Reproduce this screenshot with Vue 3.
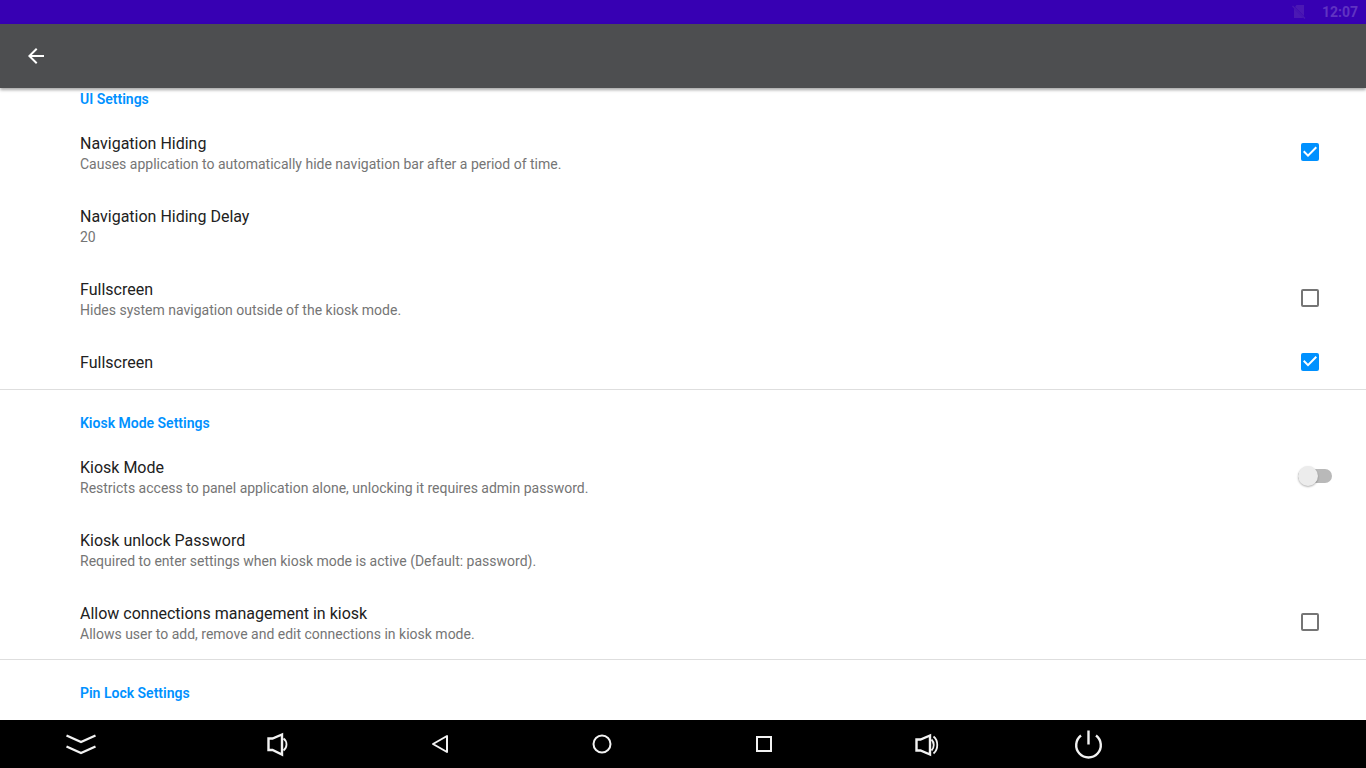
<script setup>
import { ref } from 'vue';

const sections = ref([
  {
    title: 'UI Settings',
    items: [
      {
        id: 'nav-hiding',
        title: 'Navigation Hiding',
        summary: 'Causes application to automatically hide navigation bar after a period of time.',
        type: 'checkbox',
        value: true,
      },
      { id: 'nav-delay', title: 'Navigation Hiding Delay', summary: '20', type: 'text' },
      {
        id: 'fullscreen-system',
        title: 'Fullscreen',
        summary: 'Hides system navigation outside of the kiosk mode.',
        type: 'checkbox',
        value: false,
      },
      { id: 'fullscreen', title: 'Fullscreen', type: 'checkbox', value: true },
    ],
  },
  {
    title: 'Kiosk Mode Settings',
    items: [
      {
        id: 'kiosk-mode',
        title: 'Kiosk Mode',
        summary: 'Restricts access to panel application alone, unlocking it requires admin password.',
        type: 'switch',
        value: false,
      },
      {
        id: 'kiosk-password',
        title: 'Kiosk unlock Password',
        summary: 'Required to enter settings when kiosk mode is active (Default: password).',
        type: 'text',
      },
      {
        id: 'kiosk-connections',
        title: 'Allow connections management in kiosk',
        summary: 'Allows user to add, remove and edit connections in kiosk mode.',
        type: 'checkbox',
        value: false,
      },
    ],
  },
  { title: 'Pin Lock Settings', items: [] },
]);
</script>

<template>
  <div class="screen">
    <div class="status-bar">
      <svg class="no-sim" width="14" height="16" viewBox="0 0 14 16">
        <path d="M4.500 1H12v11L3 3zM2 4.500l9.500 9.500H2z" fill="currentColor" />
        <path d="M0.500 2l12.500 12.500" stroke="currentColor" stroke-width="1.200" />
      </svg>
      <span>12:07</span>
    </div>

    <header class="app-bar">
      <button type="button" class="back-button" aria-label="Back">
        <svg width="24" height="24" viewBox="0 0 24 24">
          <path d="M20 11H7.830l5.590-5.590L12 4l-8 8 8 8 1.410-1.410L7.830 13H20v-2z" fill="#fff" />
        </svg>
      </button>
    </header>

    <main class="settings">
      <section v-for="section in sections" :key="section.title" class="section">
        <h2 class="category">{{ section.title }}</h2>
        <template v-for="item in section.items" :key="item.id">
          <button v-if="item.type === 'text'" type="button" class="row">
            <span class="texts">
              <span class="title">{{ item.title }}</span>
              <span class="summary">{{ item.summary }}</span>
            </span>
          </button>
          <label v-else class="row" :for="item.id">
            <span class="texts">
              <span class="title">{{ item.title }}</span>
              <span v-if="item.summary" class="summary">{{ item.summary }}</span>
            </span>
            <span class="widget">
              <input
                v-if="item.type === 'switch'"
                v-model="item.value"
                :id="item.id"
                type="checkbox"
                role="switch"
                class="switch"
              />
              <input v-else v-model="item.value" :id="item.id" type="checkbox" class="checkbox" />
            </span>
          </label>
        </template>
      </section>
    </main>

    <nav class="nav-bar">
      <div class="nav-side">
        <button type="button" class="nav-button" aria-label="Hide navigation">
          <svg width="32" height="32" viewBox="0 0 32 32">
            <path d="M1.500 7.500L16 14 30.500 7.500M1.500 18.500L16 25l14.500-6.500" stroke-width="2.400" />
          </svg>
        </button>
      </div>
      <button type="button" class="nav-button" aria-label="Volume down">
        <svg width="32" height="32" viewBox="0 0 32 32">
          <path d="M6.500 10.500h4L20 6.500v20l-9.500-4.500h-4z" stroke-width="2.400" />
          <path d="M21.500 10.500c4 3 4 9 0 12" stroke-width="1.800" />
        </svg>
      </button>
      <button type="button" class="nav-button" aria-label="Back">
        <svg width="32" height="32" viewBox="0 0 32 32">
          <path d="M23 8v16L9 16z" stroke-width="2" stroke-linejoin="round" />
        </svg>
      </button>
      <button type="button" class="nav-button" aria-label="Home">
        <svg width="32" height="32" viewBox="0 0 32 32">
          <circle cx="16" cy="16" r="8.500" stroke-width="2" />
        </svg>
      </button>
      <button type="button" class="nav-button" aria-label="Recent apps">
        <svg width="32" height="32" viewBox="0 0 32 32">
          <rect x="9" y="9" width="14" height="14" stroke-width="2" />
        </svg>
      </button>
      <button type="button" class="nav-button" aria-label="Volume up">
        <svg width="32" height="32" viewBox="0 0 32 32">
          <path d="M6.500 11.500h4L20 7.500v19l-9.500-4h-4z" stroke-width="2.400" />
          <path d="M21.500 11.500c3 3 3 8 0 11M23.500 8.500c5 4 5 13 0 17" stroke-width="1.800" />
        </svg>
      </button>
      <button type="button" class="nav-button" aria-label="Power">
        <svg width="32" height="32" viewBox="0 0 32 32">
          <path d="M9 7.500a12.300 12.300 0 1 0 15 0M16.500 2.500v14" stroke-width="2.400" />
        </svg>
      </button>
      <div class="nav-side"></div>
    </nav>
  </div>
</template>

<style>
body {
  margin: 0;
}
</style>

<style scoped>
.screen {
  display: flex;
  flex-direction: column;
  height: 100vh;
  overflow: hidden;
  background: #fff;
  font-family: Roboto, sans-serif;
}

button {
  border: none;
  background: none;
  font-family: inherit;
  cursor: pointer;
}

.status-bar {
  display: flex;
  flex: none;
  align-items: center;
  justify-content: flex-end;
  gap: 16px;
  height: 24px;
  padding: 0 8px;
  background: #3700b3;
  color: #6033c2;
  font-size: 14px;
  font-weight: 700;
}

.no-sim {
  color: #4b18b4;
}

.app-bar {
  display: flex;
  flex: none;
  align-items: center;
  height: 64px;
  padding: 0 24px;
  background: #4d4e50;
  box-shadow: 0 2px 3px rgba(0, 0, 0, 0.35);
  z-index: 1;
}

.back-button {
  display: flex;
  padding: 0;
}

.settings {
  flex: 1;
  min-height: 0;
  overflow: hidden;
}

.section + .section {
  border-top: 1px solid #dedede;
}

.category {
  margin: 0;
  padding: 24px 80px 8px;
  color: #0091ff;
  font-size: 14px;
  font-weight: 600;
  line-height: 18px;
}

/* the list is scrolled so its first heading touches the app bar */
.section:first-child .category {
  padding-top: 2px;
}

.row {
  display: flex;
  align-items: center;
  width: 100%;
  box-sizing: border-box;
  padding: 17px 24px 15px 80px;
  text-align: left;
  cursor: pointer;
}

.texts {
  display: flex;
  flex: 1;
  flex-direction: column;
}

.title {
  color: #212121;
  font-size: 16px;
  line-height: 22px;
}

.summary {
  color: #757575;
  font-size: 14px;
  line-height: 19px;
}

.widget {
  display: flex;
  align-items: flex-start;
  justify-content: center;
  width: 64px;
  height: 21px;
}

.checkbox {
  appearance: none;
  width: 18px;
  height: 18px;
  margin: 0;
  border: 2px solid #757575;
  border-radius: 2px;
  cursor: pointer;
}

.checkbox:checked {
  border: none;
  background: #0091ff;
}

.checkbox:checked::after {
  content: '';
  display: block;
  width: 18px;
  height: 18px;
  background: #fff;
  clip-path: path('M7 14L2 9L3.410 7.590L7 11.170L14.590 3.580L16 5Z');
}

.switch {
  appearance: none;
  display: flex;
  align-items: center;
  width: 34px;
  height: 14px;
  margin: 2px 0 0 10px;
  border-radius: 7px;
  background: #b9b9b9;
  cursor: pointer;
}

.switch::before {
  content: '';
  width: 20px;
  height: 20px;
  flex: none;
  border-radius: 50%;
  background: #ececec;
  box-shadow: 0 1px 2px rgba(0, 0, 0, 0.3);
}

.switch:checked {
  justify-content: flex-end;
  background: #80c8ff;
}

.switch:checked::before {
  background: #0091ff;
}

.nav-bar {
  display: flex;
  flex: none;
  height: 48px;
  background: #000;
}

.nav-side {
  display: flex;
  flex: 0 0 197px;
}

.nav-side .nav-button {
  flex: 0 0 162px;
}

.nav-button {
  display: flex;
  flex: 1;
  align-items: center;
  justify-content: center;
  padding: 0;
}

.nav-button svg {
  fill: none;
  stroke: #f2f2f2;
}
</style>
